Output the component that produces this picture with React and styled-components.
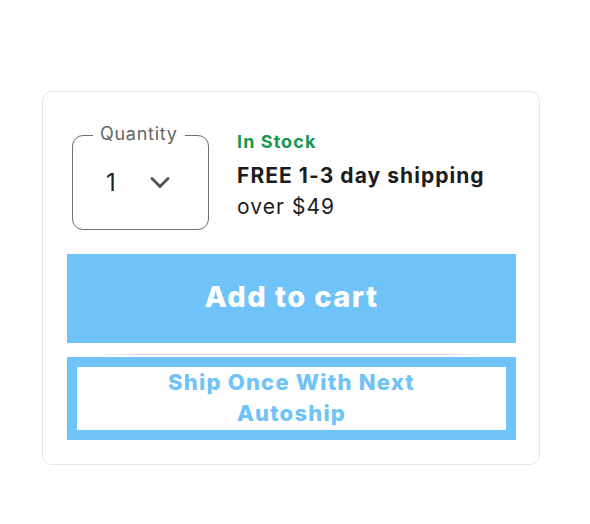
import React from "react";
import styled, { createGlobalStyle } from "styled-components";

const Global = createGlobalStyle`
  html, body { margin: 0; padding: 0; background: #ffffff; }
  body { font-family: Inter, "Noto Sans", Roboto, sans-serif; }
`;

const Page = styled.div`
  padding: 91px 0 0 42px;
`;

const Card = styled.section`
  box-sizing: border-box;
  width: 498px;
  border: 1px solid #e6e6e6;
  border-radius: 10px;
  padding: 24px 23px 24px 24px;
  display: flex;
  flex-direction: column;
`;

const TopRow = styled.div`
  display: flex;
  align-items: flex-start;
  gap: 28px;
  padding: 19px 0 0 5px;
`;

const QtyBox = styled.div`
  position: relative;
  box-sizing: border-box;
  width: 137px;
  height: 95px;
  border: 1.5px solid #6f6f6f;
  border-radius: 11px;
  display: flex;
  align-items: center;
  padding-left: 33px;
  gap: 34px;
`;

const QtyLabel = styled.span`
  position: absolute;
  top: -13px;
  left: 20px;
  padding: 0 7px;
  background: #ffffff;
  color: #666666;
  font-size: 18px;
  line-height: 22px;
  letter-spacing: 0.04em;
`;

const QtyValue = styled.span`
  font-size: 24px;
  color: #222222;
  line-height: 30px;
`;

const Chevron = styled.svg`
  width: 20px;
  height: 13px;
  display: block;
`;

const Info = styled.div`
  display: flex;
  flex-direction: column;
  margin-top: -5px;
`;

const Stock = styled.div`
  color: #17984e;
  font-weight: 700;
  font-size: 18px;
  line-height: 24px;
  letter-spacing: 0.06em;
  margin-bottom: 8px;
`;

const Shipping = styled.div`
  color: #1c1c1c;
  font-weight: ${(p) => (p.$bold ? 700 : 400)};
  font-size: 21px;
  line-height: 28px;
  letter-spacing: 0.05em;
  margin-top: ${(p) => (p.$bold ? 0 : 3)}px;
`;

const CartButton = styled.button`
  margin-top: 24px;
  height: 89px;
  border: none;
  background: #70c3f8;
  color: #ffffff;
  font-family: inherit;
  font-weight: 800;
  font-size: 29px;
  letter-spacing: 0.05em;
  padding: 0 0 5px;
  cursor: pointer;
`;

const Divider = styled.div`
  height: 1px;
  margin: 11px 38px 2px 38px;
  background: linear-gradient(90deg, rgba(214,218,255,0.3), #d6daff 8%, #d6daff 92%, rgba(214,218,255,0.3));
`;

const AutoshipButton = styled.button`
  box-sizing: border-box;
  height: 83px;
  border: 10px solid #70c3f8;
  background: #ffffff;
  color: #70c3f8;
  font-family: inherit;
  font-weight: 800;
  font-size: 22px;
  line-height: 31px;
  letter-spacing: 0.055em;
  padding: 0 60px 5px;
  cursor: pointer;
`;

export default function App() {
  return (
    <>
      <Global />
      <Page>
        <Card>
          <TopRow>
            <QtyBox>
              <QtyLabel>Quantity</QtyLabel>
              <QtyValue>1</QtyValue>
              <Chevron viewBox="0 0 20 13">
                <path d="M2 2.5 L10 10.5 L18 2.5" fill="none" stroke="#555555" strokeWidth="3" strokeLinecap="round" strokeLinejoin="round" />
              </Chevron>
            </QtyBox>
            <Info>
              <Stock>In Stock</Stock>
              <Shipping $bold>FREE 1-3 day shipping</Shipping>
              <Shipping>over $49</Shipping>
            </Info>
          </TopRow>
          <CartButton>Add to cart</CartButton>
          <Divider />
          <AutoshipButton>Ship Once With Next Autoship</AutoshipButton>
        </Card>
      </Page>
    </>
  );
}
